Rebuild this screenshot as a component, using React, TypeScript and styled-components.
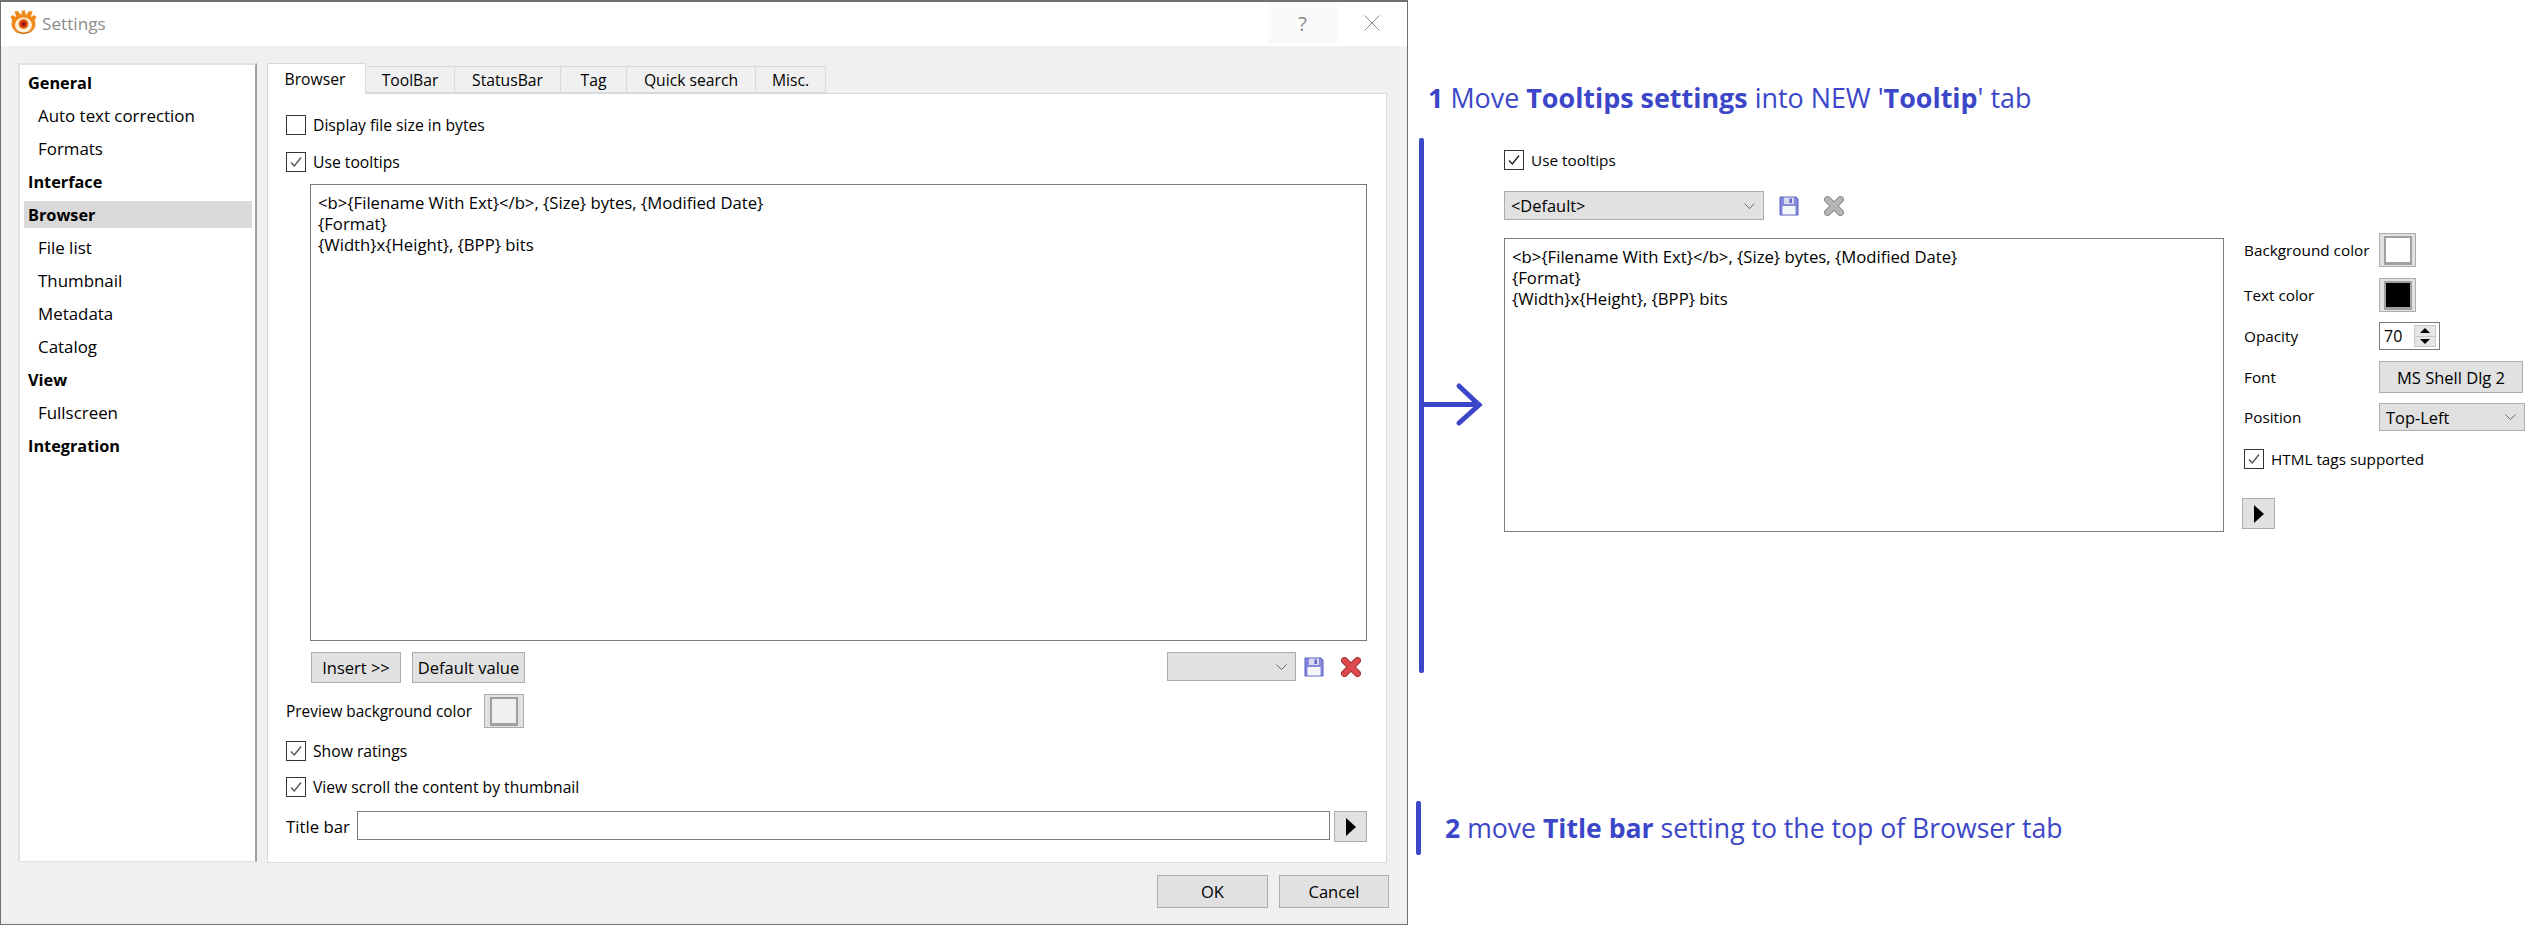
import React from 'react';
import styled, { createGlobalStyle } from 'styled-components';

const Global = createGlobalStyle`
  html, body { margin: 0; padding: 0; background: #fff; }
  body { font-family: "Open Sans", "Noto Sans", sans-serif; font-size: 15.7px; color: #000; }
  * { box-sizing: border-box; }
`;

const INK = '#3c46c8';

const Page = styled.div`
  display: flex;
  width: 2542px;
  height: 931px;
  overflow: hidden;
  background: #fff;
`;

const Win = styled.section`
  width: 1408px;
  height: 925px;
  flex: none;
  display: flex;
  flex-direction: column;
  background: #f0f0f0;
  border: 1px solid #707070;
  border-top: 2px solid #707070;
`;

const TitleBar = styled.header`
  height: 44px;
  flex: none;
  display: flex;
  align-items: flex-start;
  background: #fff;
  padding-left: 9px;
`;

const LogoSlot = styled.span`
  display: flex;
  margin-top: 8px;
`;

const TitleText = styled.span`
  margin-left: 5px;
  font-size: 17.2px;
  line-height: 44px;
  color: #8c8c8c;
`;

const TitleSpacer = styled.div`
  flex: 1;
`;

const CaptionBtn = styled.div<{ $tint?: boolean }>`
  width: ${p => (p.$tint ? '69px' : '30px')};
  height: 42px;
  margin-right: 20px;
  display: flex;
  align-items: center;
  justify-content: center;
  background: ${p => (p.$tint ? '#fafafa' : 'transparent')};
  color: #8a8a8a;
  font-size: 20px;
`;

const Body = styled.div`
  flex: 1;
  display: flex;
  flex-direction: column;
  padding: 17px 0 0 17px;
`;

const Columns = styled.div`
  display: flex;
  align-items: flex-start;
  height: 800px;
`;

const Sidebar = styled.nav`
  width: 239px;
  height: 799px;
  flex: none;
  display: flex;
  flex-direction: column;
  gap: 6px;
  background: #fff;
  border: 1px solid #e0e0e0;
  border-width: 2px 2px 1px 2px;
  border-right: 2px solid #a0a0a0;
  padding: 4px 3px 0 4px;
`;

const NavItem = styled.div<{ $head?: boolean; $active?: boolean }>`
  height: 27px;
  flex: none;
  display: flex;
  align-items: center;
  padding-left: ${p => (p.$head ? '4px' : '14px')};
  font-size: ${p => (p.$head ? '16.3px' : '16.9px')};
  font-weight: ${p => (p.$head ? 700 : 400)};
  background: ${p => (p.$active ? '#d9d9d9' : 'transparent')};
`;

const TabArea = styled.div`
  width: 1120px;
  margin-left: 10px;
  flex: none;
`;

const TabBar = styled.div`
  display: flex;
  height: 30px;
  align-items: flex-end;
  position: relative;
  z-index: 1;
`;

const Tab = styled.div<{ $w: number; $active?: boolean }>`
  width: ${p => p.$w}px;
  height: ${p => (p.$active ? '31px' : '27px')};
  margin-bottom: ${p => (p.$active ? '-1px' : '0')};
  display: flex;
  align-items: center;
  justify-content: center;
  padding-right: ${p => (p.$active ? '3px' : '0')};
  background: ${p => (p.$active ? '#fff' : '#f0f0f0')};
  border: 1px solid #d9d9d9;
  border-left-width: ${p => (p.$active ? '1px' : '0')};
  border-bottom-width: ${p => (p.$active ? '0' : '1px')};
`;

const Panel = styled.div`
  height: 770px;
  background: #fff;
  border: 1px solid #d9d9d9;
  padding: 21px 19px 0 18px;
`;

const CheckRow = styled.label<{ $mb?: number }>`
  display: flex;
  align-items: center;
  height: 20px;
  gap: 7px;
  margin-bottom: ${p => p.$mb ?? 0}px;
`;

const Box = styled.span`
  width: 20px;
  height: 20px;
  flex: none;
  background: #fff;
  border: 1px solid #333;
  display: flex;
  align-items: center;
  justify-content: center;
`;

const Editor = styled.div<{ $w: number; $h: number }>`
  width: ${p => p.$w}px;
  height: ${p => p.$h}px;
  flex: none;
  background: #fff;
  border: 1px solid #7a7a7a;
  padding: 7px 7px;
  font-size: 16.7px;
  line-height: 21px;
`;

const EditorLine = styled.div`
  white-space: nowrap;
`;

const EditorIndent = styled.div`
  margin-left: 24px;
`;

const ButtonRow = styled.div`
  display: flex;
  align-items: flex-start;
  height: 31px;
  margin: 11px 0 11px 25px;
`;

const Btn = styled.div<{ $w: number; $h?: number; $ml?: number }>`
  width: ${p => p.$w}px;
  height: ${p => p.$h ?? 31}px;
  margin-left: ${p => p.$ml ?? 0}px;
  flex: none;
  display: flex;
  align-items: center;
  justify-content: center;
  font-size: 16.5px;
  background: #e1e1e1;
  border: 1px solid #adadad;
`;

const Combo = styled.div<{ $w: number; $h?: number }>`
  width: ${p => p.$w}px;
  height: ${p => p.$h ?? 29}px;
  flex: none;
  display: flex;
  align-items: center;
  justify-content: space-between;
  padding: 0 8px 0 6px;
  font-size: 16.4px;
  background: #e1e1e1;
  border: 1px solid #adadad;
`;

const Grow = styled.div`
  flex: 1;
`;

const IconSlot = styled.span<{ $ml: number; $mt?: number }>`
  display: flex;
  flex: none;
  margin-left: ${p => p.$ml}px;
  margin-top: ${p => p.$mt ?? 0}px;
`;

const PreviewRow = styled.div`
  display: flex;
  align-items: center;
  height: 34px;
  margin-bottom: 13px;
`;

const PreviewLabel = styled.span`
  width: 198px;
  flex: none;
  font-size: 15.4px;
`;

const Swatch = styled.div<{ $w: number; $fill: string }>`
  width: ${p => p.$w}px;
  height: 34px;
  flex: none;
  display: flex;
  align-items: center;
  justify-content: center;
  background: #e1e1e1;
  border: 1px solid #adadad;
  &::after {
    content: '';
    width: 24px;
    height: 24px;
    background: ${p => p.$fill};
    border: 2px solid #a0a0a0;
    border-width: 2px 2px 3px 2px;
  }
`;

const TitleRow = styled.div`
  display: flex;
  align-items: flex-start;
  margin-top: 14px;
`;

const RowLabel = styled.span`
  width: 71px;
  flex: none;
  font-size: 16.8px;
  line-height: 31px;
`;

const LineInput = styled.div`
  width: 973px;
  height: 29px;
  background: #fff;
  border: 1px solid #7a7a7a;
`;

const Footer = styled.div`
  display: flex;
  justify-content: flex-end;
  gap: 11px;
  margin-top: 12px;
  padding-right: 18px;
`;

const Notes = styled.div`
  flex: 1;
  display: flex;
  flex-direction: column;
  padding: 76px 0 0 8px;
  color: ${INK};
`;

const Heading = styled.h2<{ $ml: number; $size: number }>`
  margin: 0 0 0 ${p => p.$ml}px;
  font-size: ${p => p.$size}px;
  line-height: 44px;
  font-weight: 400;
  white-space: nowrap;
  color: ${INK};
  b { font-weight: 700; }
`;

const Detail = styled.div`
  display: flex;
  height: 535px;
  margin-top: 18px;
`;

const Bracket = styled.svg`
  width: 85px;
  height: 535px;
  flex: none;
  margin-left: 3px;
`;

const Mock = styled.div`
  flex: none;
  width: 1040px;
  padding-top: 12px;
  color: #000;
  font-size: 15.3px;
`;

const MockCombo = styled.div`
  display: flex;
  align-items: flex-start;
  margin-top: 21px;
`;

const MockMain = styled.div`
  display: flex;
  margin-top: 18px;
`;

const SideCol = styled.div`
  flex: 1;
  margin: -5px 0 0 20px;
  display: flex;
  flex-direction: column;
`;

const FormRow = styled.div<{ $h: number; $mb: number }>`
  display: flex;
  align-items: center;
  height: ${p => p.$h}px;
  margin-bottom: ${p => p.$mb}px;
`;

const FormLabel = styled.span`
  width: 135px;
  flex: none;
`;

const Spin = styled.div`
  width: 61px;
  height: 28px;
  display: flex;
  align-items: center;
  justify-content: space-between;
  padding: 0 3px 0 4px;
  font-size: 16px;
  background: #fff;
  border: 1px solid #7a7a7a;
`;

const Stepper = styled.div`
  width: 22px;
  height: 22px;
  display: flex;
  flex-direction: column;
  border: 1px solid #c8c8c8;
  background: #e6e6e6;
`;

const StepCell = styled.div<{ $down?: boolean }>`
  flex: 1;
  display: flex;
  align-items: center;
  justify-content: center;
  border-top: ${p => (p.$down ? '1px solid #c8c8c8' : 'none')};
  &::after {
    content: '';
    border-left: 5px solid transparent;
    border-right: 5px solid transparent;
    ${p => (p.$down ? 'border-top: 5px solid #000;' : 'border-bottom: 5px solid #000;')}
  }
`;

const SecondNote = styled.div`
  display: flex;
  align-items: center;
  height: 54px;
  margin-top: 128px;
`;

const NoteBar = styled.div`
  width: 5px;
  height: 54px;
  flex: none;
  border-radius: 2px;
  background: ${INK};
`;

const Logo = () => (
  <svg width="27" height="26" viewBox="0 0 27 26">
    <g fill="#ee8a1c">
      <path d="M7 9 L4.5 1.5 L8 1 L11.5 6 Z" />
      <path d="M11 6 L12 0.5 H15 L16 6 Z" />
      <path d="M20 9 L22.5 1.5 L19 1 L15.5 6 Z" />
      <path d="M4 13 L0.5 7 L3 5 L8 9 Z" />
      <path d="M23 13 L26.5 7 L24 5 L19 9 Z" />
    </g>
    <ellipse cx="13.5" cy="14" rx="12" ry="10" fill="#ef8b1b" />
    <ellipse cx="13.5" cy="15" rx="8.5" ry="7.5" fill="#fdf0dd" />
    <circle cx="13.5" cy="14" r="5" fill="#e07a1a" />
    <circle cx="13.5" cy="14" r="3.4" fill="#cf2c10" />
    <circle cx="13.5" cy="14" r="1.5" fill="#7d1206" />
    <path d="M4 21 Q13.5 27.5 23 21 Q13.5 24.5 4 21 Z" fill="#b9701f" opacity="0.8" />
  </svg>
);

const CheckMark = ({ color = '#555' }: { color?: string }) => (
  <svg width="14" height="14" viewBox="0 0 14 14">
    <path d="M2 7.5 L5.3 11 L12 2.5" fill="none" stroke={color} strokeWidth="1.4" />
  </svg>
);

const Check = ({ on, color }: { on?: boolean; color?: string }) => <Box>{on && <CheckMark color={color} />}</Box>;

const Chevron = () => (
  <svg width="11" height="6" viewBox="0 0 11 6">
    <path d="M0.5 0.5 L5.5 5.5 L10.5 0.5" fill="none" stroke="#666" strokeWidth="1" />
  </svg>
);

const SaveIcon = () => (
  <svg width="20" height="20" viewBox="0 0 20 20">
    <path d="M1 1 H17 L19 3 V19 H1 Z" fill="#8589dc" stroke="#5a5fc0" strokeWidth="1" />
    <rect x="5" y="1.5" width="10" height="6.5" fill="#d9d9ef" />
    <rect x="10.5" y="2.5" width="2.5" height="4.5" fill="#6468c8" />
    <rect x="3.5" y="10" width="13" height="8.5" fill="#f5f5fc" />
  </svg>
);

const CrossIcon = ({ fill, edge }: { fill: string; edge: string }) => (
  <svg width="20" height="20" viewBox="0 0 20 20">
    <path d="M3.5 3.5 L16.5 16.5 M16.5 3.5 L3.5 16.5" fill="none" stroke={edge} strokeWidth="7" strokeLinecap="round" />
    <path d="M3.5 3.5 L16.5 16.5 M16.5 3.5 L3.5 16.5" fill="none" stroke={fill} strokeWidth="5" strokeLinecap="round" />
  </svg>
);

const Play = () => (
  <svg width="12" height="20" viewBox="0 0 12 20">
    <path d="M1 1 L11 10 L1 19 Z" fill="#000" />
  </svg>
);

const navItems: [string, boolean?, boolean?][] = [
  ['General', true],
  ['Auto text correction'],
  ['Formats'],
  ['Interface', true],
  ['Browser', true, true],
  ['File list'],
  ['Thumbnail'],
  ['Metadata'],
  ['Catalog'],
  ['View', true],
  ['Fullscreen'],
  ['Integration', true],
];

const tabs: [string, number][] = [
  ['Browser', 99],
  ['ToolBar', 89],
  ['StatusBar', 106],
  ['Tag', 66],
  ['Quick search', 129],
  ['Misc.', 70],
];

const TemplateText = () => (
  <>
    <EditorLine>{'<b>{Filename With Ext}</b>, {Size} bytes, {Modified Date}'}</EditorLine>
    <EditorLine>{'{Format}'}</EditorLine>
    <EditorLine>{'{Width}x{Height}, {BPP} bits'}</EditorLine>
  </>
);

export default function App() {
  return (
    <Page>
      <Global />
      <Win>
        <TitleBar>
          <LogoSlot>
            <Logo />
          </LogoSlot>
          <TitleText>Settings</TitleText>
          <TitleSpacer />
          <CaptionBtn $tint>?</CaptionBtn>
          <CaptionBtn>
            <svg width="16" height="16" viewBox="0 0 16 16">
              <path d="M0.5 0.5 L15.5 15.5 M15.5 0.5 L0.5 15.5" stroke="#8a8a8a" strokeWidth="1" fill="none" />
            </svg>
          </CaptionBtn>
        </TitleBar>
        <Body>
          <Columns>
            <Sidebar>
              {navItems.map(([label, head, active]) => (
                <NavItem key={label} $head={head} $active={active}>
                  {label}
                </NavItem>
              ))}
            </Sidebar>
            <TabArea>
              <TabBar>
                {tabs.map(([label, w], i) => (
                  <Tab key={label} $w={w} $active={i === 0}>
                    {label}
                  </Tab>
                ))}
              </TabBar>
              <Panel>
                <CheckRow $mb={17}>
                  <Check />
                  Display file size in bytes
                </CheckRow>
                <CheckRow $mb={12}>
                  <Check on />
                  Use tooltips
                </CheckRow>
                <EditorIndent>
                  <Editor $w={1057} $h={457}>
                    <TemplateText />
                  </Editor>
                </EditorIndent>
                <ButtonRow>
                  <Btn $w={90}>Insert &gt;&gt;</Btn>
                  <Btn $w={113} $ml={11}>
                    Default value
                  </Btn>
                  <Grow />
                  <Combo $w={129}>
                    <span />
                    <Chevron />
                  </Combo>
                  <IconSlot $ml={8} $mt={5}>
                    <SaveIcon />
                  </IconSlot>
                  <IconSlot $ml={17} $mt={5}>
                    <CrossIcon fill="#dc4a4e" edge="#a83232" />
                  </IconSlot>
                  <IconSlot $ml={6} />
                </ButtonRow>
                <PreviewRow>
                  <PreviewLabel>Preview background color</PreviewLabel>
                  <Swatch $w={40} $fill="#f0f0f0" />
                </PreviewRow>
                <CheckRow $mb={16}>
                  <Check on />
                  Show ratings
                </CheckRow>
                <CheckRow>
                  <Check on />
                  View scroll the content by thumbnail
                </CheckRow>
                <TitleRow>
                  <RowLabel>Title bar</RowLabel>
                  <LineInput />
                  <Btn $w={33} $ml={4}>
                    <Play />
                  </Btn>
                </TitleRow>
              </Panel>
            </TabArea>
          </Columns>
          <Footer>
            <Btn $w={111} $h={33}>OK</Btn>
            <Btn $w={110} $h={33}>Cancel</Btn>
          </Footer>
        </Body>
      </Win>
      <Notes>
        <Heading $ml={12} $size={26.9}>
          <b>1</b> Move <b>Tooltips settings</b> into NEW '<b>Tooltip</b>' tab
        </Heading>
        <Detail>
          <Bracket viewBox="0 0 85 535">
            <rect x="0" y="0" width="5" height="535" rx="2" fill={INK} />
            <path d="M3 266.5 H60 M40 248 L60 267 L40 285" fill="none" stroke={INK} strokeWidth="5" strokeLinecap="round" />
          </Bracket>
          <Mock>
            <CheckRow>
              <Check on color="#222" />
              Use tooltips
            </CheckRow>
            <MockCombo>
              <Combo $w={260}>
                &lt;Default&gt;
                <Chevron />
              </Combo>
              <IconSlot $ml={15} $mt={5}>
                <SaveIcon />
              </IconSlot>
              <IconSlot $ml={25} $mt={5}>
                <CrossIcon fill="#b5b5b5" edge="#8c8c8c" />
              </IconSlot>
            </MockCombo>
            <MockMain>
              <Editor $w={720} $h={294}>
                <TemplateText />
              </Editor>
              <SideCol>
                <FormRow $h={34} $mb={11}>
                  <FormLabel>Background color</FormLabel>
                  <Swatch $w={37} $fill="#fff" />
                </FormRow>
                <FormRow $h={34} $mb={10}>
                  <FormLabel>Text color</FormLabel>
                  <Swatch $w={37} $fill="#000" />
                </FormRow>
                <FormRow $h={28} $mb={11}>
                  <FormLabel>Opacity</FormLabel>
                  <Spin>
                    70
                    <Stepper>
                      <StepCell />
                      <StepCell $down />
                    </Stepper>
                  </Spin>
                </FormRow>
                <FormRow $h={32} $mb={10}>
                  <FormLabel>Font</FormLabel>
                  <Btn $w={144} $h={32}>MS Shell Dlg 2</Btn>
                </FormRow>
                <FormRow $h={28} $mb={18}>
                  <FormLabel>Position</FormLabel>
                  <Combo $w={146} $h={28}>
                    Top-Left
                    <Chevron />
                  </Combo>
                </FormRow>
                <CheckRow $mb={29}>
                  <Check on />
                  HTML tags supported
                </CheckRow>
                <Btn $w={33} $ml={-2}>
                  <Play />
                </Btn>
              </SideCol>
            </MockMain>
          </Mock>
        </Detail>
        <SecondNote>
          <NoteBar />
          <Heading $ml={24} $size={26.6}>
            <b>2</b> move <b>Title bar</b> setting to the top of Browser tab
          </Heading>
        </SecondNote>
      </Notes>
    </Page>
  );
}
